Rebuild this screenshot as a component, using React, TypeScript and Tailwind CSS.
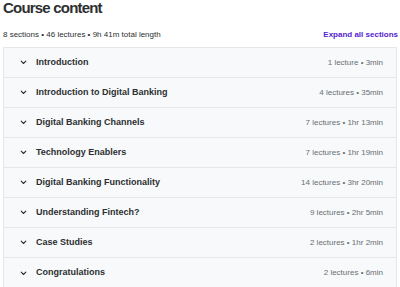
const sections = [
  { title: "Introduction", meta: "1 lecture • 3min" },
  { title: "Introduction to Digital Banking", meta: "4 lectures • 35min" },
  { title: "Digital Banking Channels", meta: "7 lectures • 1hr 13min" },
  { title: "Technology Enablers", meta: "7 lectures • 1hr 19min" },
  { title: "Digital Banking Functionality", meta: "14 lectures • 3hr 20min" },
  { title: "Understanding Fintech?", meta: "9 lectures • 2hr 5min" },
  { title: "Case Studies", meta: "2 lectures • 1hr 2min" },
  { title: "Congratulations", meta: "2 lectures • 6min" },
];

function Chevron() {
  return (
    <svg width="7" height="5" viewBox="0 0 7 5" fill="none" className="text-[#2d2f31]">
      <path d="M1.2 1.2L3.5 3.5L5.8 1.2" stroke="currentColor" strokeWidth="1.1" strokeLinecap="round" strokeLinejoin="round" />
    </svg>
  );
}

export default function App() {
  return (
    <div className="h-[287px] w-[400px] overflow-hidden bg-white font-['Liberation_Sans',Arial,sans-serif] text-[#2d2f31]">
      <h2 className="px-[3px] text-[15px] font-bold leading-[16px] tracking-[-0.8px]">
        Course content
      </h2>
      <div className="flex h-[31px] items-center justify-between pl-[3px] pr-[2px] pt-[6px]">
        <span className="text-[8px] text-[#2d2f31]">
          8 sections • 46 lectures • 9h 41m total length
        </span>
        <button className="text-[8px] font-bold text-[#5624d0]">
          Expand all sections
        </button>
      </div>
      <div className="mx-[3px] border border-[#e4e8eb] bg-[#f7f9fa]">
        {sections.map((s) => (
          <div
            key={s.title}
            className="flex h-[30px] items-center border-b border-[#e4e8eb] pl-[16px] pr-[13px] last:border-b-0"
          >
            <Chevron />
            <span className="ml-[9px] text-[9px] font-bold">{s.title}</span>
            <span className="ml-auto text-[8px] text-[#6a6f73]">{s.meta}</span>
          </div>
        ))}
      </div>
    </div>
  );
}
